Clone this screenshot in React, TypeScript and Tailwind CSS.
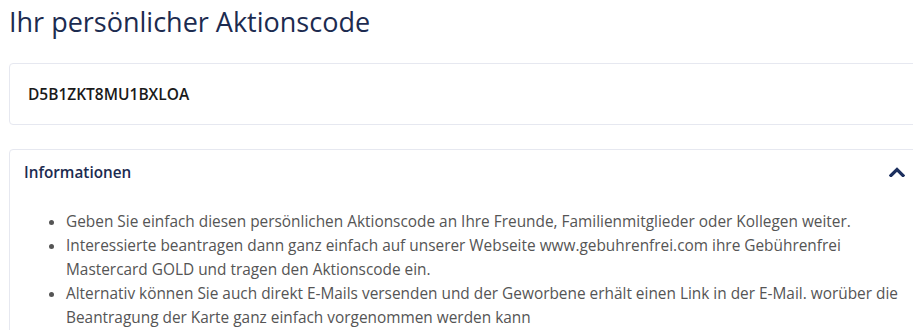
import React from 'react';

const bullets = [
  'Geben Sie einfach diesen persönlichen Aktionscode an Ihre Freunde, Familienmitglieder oder Kollegen weiter.',
  'Interessierte beantragen dann ganz einfach auf unserer Webseite www.gebuhrenfrei.com ihre Gebührenfrei Mastercard GOLD und tragen den Aktionscode ein.',
  'Alternativ können Sie auch direkt E-Mails versenden und der Geworbene erhält einen Link in der E-Mail. worüber die Beantragung der Karte ganz einfach vorgenommen werden kann',
];

export default function App() {
  return (
    <div className="w-[913px] h-[330px] overflow-hidden bg-white font-['Open_Sans',sans-serif]">
      <div className="w-[920px] pl-[9px]">
        {/* Title */}
        <h1 className="pt-[5px] text-[27px] leading-[34px] font-normal text-[#1c2b50]">
          Ihr persönlicher Aktionscode
        </h1>

        {/* Code card */}
        <div className="mt-[24px] rounded-[4px] border border-[#e6e8f0] px-[18px] py-[19px]">
          <div className="text-[15.5px] leading-[22px] font-semibold text-[#1a1a1a]">D5B1ZKT8MU1BXLOA</div>
        </div>

        {/* Info card */}
        <div className="mt-[24px] rounded-[4px] border border-[#e6e8f0] px-[14px] pb-[20px]">
          <div className="flex items-center justify-between py-[11px]">
            <span className="text-[15.3px] leading-[22px] font-semibold text-[#1c2b50]">Informationen</span>
            <svg width="16" height="10" viewBox="0 0 16 10">
              <polyline points="2,8.5 8,2.5 14,8.5" fill="none" stroke="#1c2f5e" strokeWidth="3.2" strokeLinecap="square" />
            </svg>
          </div>
          <ul className="mt-[16px] list-disc pl-[42px] text-[15.4px] leading-[24px] text-[#555555]">
            {bullets.map((b, i) => (
              <li key={i}>{b}</li>
            ))}
          </ul>
        </div>
      </div>
    </div>
  );
}
